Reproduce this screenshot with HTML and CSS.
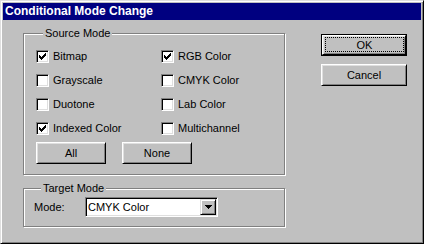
FILE: index.html
```html
<!DOCTYPE html>
<html lang="en">
<head>
<meta charset="UTF-8">
<title>Conditional Mode Change</title>
<link rel="stylesheet" href="styles.css">
</head>
<body>
    <div class="dialog">
        <div class="titlebar">Conditional Mode Change</div>
        <div class="content">
            <div class="groups">
                <fieldset class="group source">
                    <legend>Source Mode</legend>
                    <div class="checks">
                        <label class="check"><span class="box"><svg width="7" height="7" viewBox="0 0 7 7"><path d="M6 0h1v1H6z M5 1h2v1H5z M0 2h1v1H0z M4 2h3v1H4z M0 3h2v1H0z M3 3h3v1H3z M0 4h5v1H0z M1 5h3v1H1z M2 6h1v1H2z"/></svg></span>Bitmap</label>
                        <label class="check"><span class="box"><svg width="7" height="7" viewBox="0 0 7 7"><path d="M6 0h1v1H6z M5 1h2v1H5z M0 2h1v1H0z M4 2h3v1H4z M0 3h2v1H0z M3 3h3v1H3z M0 4h5v1H0z M1 5h3v1H1z M2 6h1v1H2z"/></svg></span>RGB Color</label>
                        <label class="check"><span class="box"></span>Grayscale</label>
                        <label class="check"><span class="box"></span>CMYK Color</label>
                        <label class="check"><span class="box"></span>Duotone</label>
                        <label class="check"><span class="box"></span>Lab Color</label>
                        <label class="check"><span class="box"><svg width="7" height="7" viewBox="0 0 7 7"><path d="M6 0h1v1H6z M5 1h2v1H5z M0 2h1v1H0z M4 2h3v1H4z M0 3h2v1H0z M3 3h3v1H3z M0 4h5v1H0z M1 5h3v1H1z M2 6h1v1H2z"/></svg></span>Indexed Color</label>
                        <label class="check"><span class="box"></span>Multichannel</label>
                    </div>
                    <div class="row-btns">
                        <button class="btn small">All</button>
                        <button class="btn small">None</button>
                    </div>
                </fieldset>
                <fieldset class="group target">
                    <legend>Target Mode</legend>
                    <div class="mode-row">
                        <span class="mode-label">Mode:</span>
                        <div class="select">
                            <span class="value">CMYK Color</span>
                            <span class="arrow"><svg width="7" height="4" viewBox="0 0 7 4"><path d="M0 0h7v1H0z M1 1h5v1H1z M2 2h3v1H2z M3 3h1v1H3z"/></svg></span>
                        </div>
                    </div>
                </fieldset>
            </div>
            <div class="actions">
                <div class="default-ring">
                    <button class="btn wide"><span class="focus">OK</span></button>
                </div>
                <button class="btn wide cancel">Cancel</button>
            </div>
        </div>
    </div>
</body>
</html>
```
FILE: styles.css
```css
* {
    box-sizing: border-box;
}
body {
    margin: 0;
    background: #c0c0c0;
    font-family: "Liberation Sans", Arial, sans-serif;
    font-size: 11px;
    color: #000;
}

/* window frame */
.dialog {
    width: 424px;
    height: 244px;
    background: #c0c0c0;
    border: 1px solid;
    border-color: #dfdfdf #000 #000 #dfdfdf;
    box-shadow: inset 1px 1px #fff, inset -1px -1px #808080;
    padding: 2px;
}
.titlebar {
    height: 17px;
    line-height: 17px;
    background: #000080;
    color: #fff;
    font-size: 12px;
    font-weight: bold;
    padding-left: 2px;
    white-space: nowrap;
}
.content {
    display: flex;
    padding: 7px 0 0 20px;
}

/* group boxes */
.group {
    margin: 0;
    width: 262px;
    min-width: 0;
    border: 1px solid #808080;
    box-shadow: inset 1px 1px #fff, 1px 1px #fff;
    padding: 0;
}
.group legend {
    margin-left: 7px;
    padding: 0 2px;
    line-height: 13px;
    background: #c0c0c0;
}
.source {
    padding: 10px 0 10px 12px;
}
.target {
    margin-top: 7px;
    padding: 2px 0 9px 10px;
}

/* checkboxes */
.checks {
    display: grid;
    grid-template-columns: 125px auto;
    row-gap: 11px;
}
.check {
    display: flex;
    align-items: center;
    gap: 4px;
    height: 13px;
    line-height: 13px;
}
.box {
    display: flex;
    width: 13px;
    height: 13px;
    background: #fff;
    border: 1px solid;
    border-color: #808080 #fff #fff #808080;
    box-shadow: inset 1px 1px #000, inset -1px -1px #dfdfdf;
    padding: 2px;
}
.box svg {
    display: block;
}

/* buttons */
.btn {
    font-family: inherit;
    font-size: 11px;
    color: #000;
    background: #c0c0c0;
    border: 1px solid;
    border-color: #fff #000 #000 #fff;
    box-shadow: inset 1px 1px #dfdfdf, inset -1px -1px #808080;
    height: 22px;
    padding: 0;
    margin: 0;
}
.row-btns {
    display: flex;
    gap: 16px;
    margin-top: 7px;
}
.small {
    width: 70px;
}
.actions {
    display: flex;
    flex-direction: column;
    gap: 8px;
    margin: 7px 0 0 36px;
}
.default-ring {
    width: 86px;
    height: 22px;
    border: 1px solid #000;
    display: flex;
}
.default-ring .btn {
    width: 84px;
    height: 20px;
    padding: 1px 1px 2px 2px;
}
.focus {
    display: flex;
    justify-content: center;
    align-items: center;
    height: 100%;
    border: 1px dotted #000;
}
.wide {
    width: 86px;
}

/* target mode */
.mode-row {
    display: flex;
    align-items: center;
    height: 20px;
}
.mode-label {
    width: 51px;
}
.select {
    display: flex;
    align-items: center;
    width: 133px;
    height: 20px;
    background: #fff;
    border: 1px solid;
    border-color: #808080 #fff #fff #808080;
    box-shadow: inset 1px 1px #000, inset -1px -1px #dfdfdf;
    padding: 1px 1px 1px 2px;
}
.value {
    flex: 1;
}
.arrow {
    display: flex;
    justify-content: center;
    align-items: center;
    width: 16px;
    height: 16px;
    background: #c0c0c0;
    border: 1px solid;
    border-color: #dfdfdf #000 #000 #dfdfdf;
    box-shadow: inset 1px 1px #fff, inset -1px -1px #808080;
}
.arrow svg {
    display: block;
}
```
